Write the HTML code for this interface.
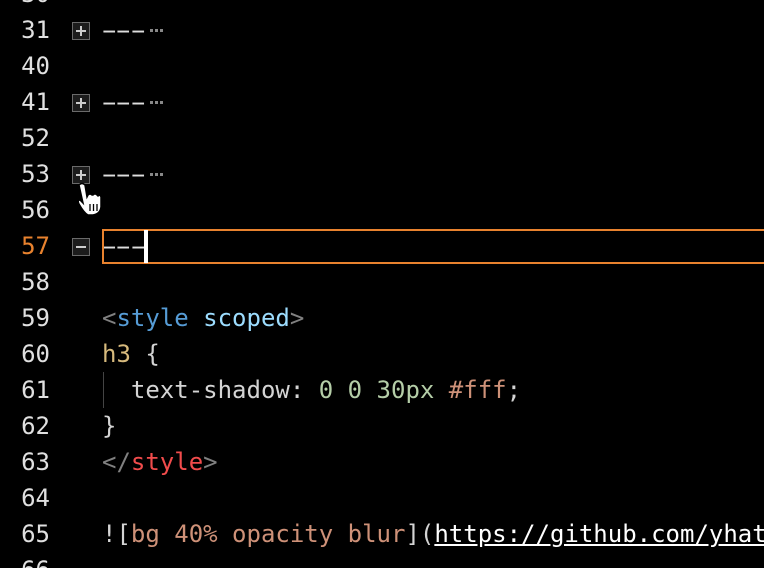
<!DOCTYPE html>
<html><head><style>
html,body{margin:0;background:#000;width:764px;height:568px;overflow:hidden}
body{position:relative;font-family:"DejaVu Sans Mono","Liberation Mono",monospace;font-size:24px;color:#d4d4d4}
.r{position:absolute;left:0;height:36px;line-height:36px;white-space:pre;width:764px}
.n{position:absolute;left:0;width:50px;text-align:right;color:#e0e0e0}
.c{position:absolute;left:102px}
.f{position:absolute;left:72px;top:10px;width:16px;height:16px;border:1px solid #6a6a6a;background:#1c1c1c}
.f:before{content:"";position:absolute;left:3px;top:7px;width:10px;height:2px;background:#ccc}
.p:after{content:"";position:absolute;left:7px;top:3px;width:2px;height:10px;background:#ccc}
.h{display:inline-block;transform:scaleX(1.9);color:#ddd}
.d{position:absolute;left:150px;top:17px;width:14px;height:3px;background:repeating-linear-gradient(90deg,#888 0 3px,transparent 3px 5px)}
</style></head><body>
<div class="r" style="top:-24px"><span class="n">30</span></div>
<div class="r" style="top:12px"><span class="n">31</span><span class="f p"></span><span class="c"><span class="h">-</span><span class="h">-</span><span class="h">-</span></span><span class="d"></span></div>
<div class="r" style="top:48px"><span class="n">40</span></div>
<div class="r" style="top:84px"><span class="n">41</span><span class="f p"></span><span class="c"><span class="h">-</span><span class="h">-</span><span class="h">-</span></span><span class="d"></span></div>
<div class="r" style="top:120px"><span class="n">52</span></div>
<div class="r" style="top:156px"><span class="n">53</span><span class="f p"></span><span class="c"><span class="h">-</span><span class="h">-</span><span class="h">-</span></span><span class="d"></span></div>
<div class="r" style="top:192px"><span class="n">56</span></div>
<div class="r" style="top:228px"><span class="n" style="color:#e8822e">57</span><span class="f"></span><span class="c"><span class="h">-</span><span class="h">-</span><span class="h">-</span></span>
<div style="position:absolute;left:102px;top:1px;width:670px;height:35px;border:2px solid #e8822e;box-sizing:border-box"></div>
<div style="position:absolute;left:144px;top:2px;width:4px;height:33px;background:#fff"></div></div>
<div class="r" style="top:264px"><span class="n">58</span></div>
<div class="r" style="top:300px"><span class="n">59</span><span class="c"><span style="color:#808080">&lt;</span><span style="color:#569cd6">style</span> <span style="color:#9cdcfe">scoped</span><span style="color:#808080">&gt;</span></span></div>
<div class="r" style="top:336px"><span class="n">60</span><span class="c"><span style="color:#d7ba7d">h3</span> {</span></div>
<div class="r" style="top:372px"><span class="n">61</span><span style="position:absolute;left:103px;top:0;width:1px;height:36px;background:#444"></span><span class="c">  text-shadow: <span style="color:#b5cea8">0 0 30px</span> <span style="color:#ce9178">#fff</span>;</span></div>
<div class="r" style="top:408px"><span class="n">62</span><span class="c">}</span></div>
<div class="r" style="top:444px"><span class="n">63</span><span class="c"><span style="color:#808080">&lt;/</span><span style="color:#f14c4c">style</span><span style="color:#808080">&gt;</span></span></div>
<div class="r" style="top:480px"><span class="n">64</span></div>
<div class="r" style="top:516px"><span class="n">65</span><span class="c">![<span style="color:#ce9178">bg 40% opacity blur</span>](<span style="color:#fff;text-decoration:underline">https://github.com/yhatt</span></span></div>
<div class="r" style="top:552px"><span class="n">66</span></div>
<svg style="position:absolute;left:74px;top:182px" width="34" height="36" viewBox="0 0 34 36"><path d="M5 3 Q8 0 11 3 L13 15 L14 13 Q16 11 18 13 L19 13 Q21 11 23 13 L24 14 Q26 12 27 15 L27 25 Q26 32 19 33 L14 33 Q10 31 5 22 Q3 18 6 18 L9 21 Z" fill="#fff" stroke="#000" stroke-width="1.5"/><path d="M16 22v7M19.5 22v7M23 22v7" stroke="#000" stroke-width="1.3"/></svg>
</body></html>
